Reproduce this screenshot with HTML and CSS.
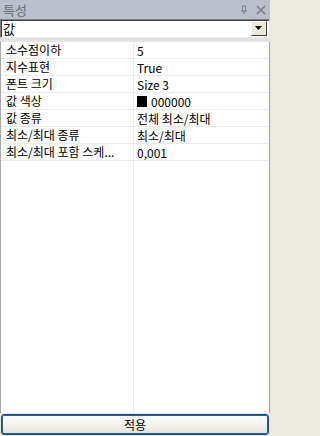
FILE: index.html
```html
<!DOCTYPE html>
<html>
<head>
<meta charset="utf-8">
<link rel="stylesheet" href="styles.css">
</head>
<body>
<div class="panel">
  <div class="titlebar">
    <span class="title">특성</span>
    <span class="tools">
      <svg class="pin" width="10" height="10" viewBox="0 0 10 10"><path d="M3 1h4M3.5 1v5M6.5 1v5M2 6h6M5 6v3" stroke="#7b808a" stroke-width="1" fill="none"/></svg>
      <svg class="close" width="10" height="10" viewBox="0 0 10 10"><path d="M1 1L9 9M9 1L1 9" stroke="#7b808a" stroke-width="1.6" fill="none"/></svg>
    </span>
  </div>
  <div class="combo">
    <span class="combo-text">값</span>
    <span class="combo-btn"><svg width="8" height="5" viewBox="0 0 8 5"><path d="M0 0h7L3.5 4z" fill="#000"/></svg></span>
  </div>
  <div class="gap"></div>
  <div class="grid">
    <div class="row"><div class="name">소수점이하</div><div class="val">5</div></div>
    <div class="row"><div class="name">지수표현</div><div class="val">True</div></div>
    <div class="row"><div class="name">폰트 크기</div><div class="val">Size 3</div></div>
    <div class="row"><div class="name">값 색상</div><div class="val"><span class="swatch"></span>000000</div></div>
    <div class="row"><div class="name">값 종류</div><div class="val">전체 최소/최대</div></div>
    <div class="row"><div class="name">최소/최대 종류</div><div class="val">최소/최대</div></div>
    <div class="row"><div class="name">최소/최대 포함 스케...</div><div class="val">0,001</div></div>
    <div class="row filler"><div class="name"></div><div class="val"></div></div>
  </div>
  <div class="footer">
    <button class="apply">적용</button>
  </div>
</div>
</body>
</html>
```

FILE: styles.css
```css
html, body {
  margin: 0;
  padding: 0;
  background: #ebe9e0;
}
body {
  width: 270px;
  height: 436px;
  overflow: hidden;
  font-family: "Noto Sans CJK KR", "DejaVu Sans", sans-serif;
  font-size: 12px;
  color: #000;
}
.panel {
  display: flex;
  flex-direction: column;
  height: 436px;
}
.titlebar {
  height: 19px;
  background: #b9bfcb;
  display: flex;
  align-items: center;
  justify-content: space-between;
  padding: 0 4px 0 3px;
}
.title {
  color: #676c77;
  font-size: 13px;
  line-height: 19px;
}
.tools {
  display: flex;
  gap: 7px;
  align-items: center;
}
.combo {
  height: 19px;
  box-sizing: border-box;
  background: #fff;
  border-top: 1px solid #7f7d75;
  border-left: 1px solid #7f7d75;
  border-bottom: 1px solid #ebe9e0;
  border-right: 1px solid #ebe9e0;
  box-shadow: inset 1px 1px 0 #404040;
  display: flex;
  align-items: center;
  justify-content: space-between;
  padding: 0 2px 0 2px;
}
.combo-text {
  font-size: 13px;
  line-height: 16px;
}
.combo-btn {
  width: 16px;
  height: 15px;
  box-sizing: border-box;
  background: #ece9d8;
  border: 1px solid;
  border-color: #fff #404040 #404040 #fff;
  display: flex;
  align-items: center;
  justify-content: center;
}
.gap {
  height: 3px;
  background: #e3e3e3;
}
.grid {
  flex: 1;
  background: #fff;
  border-left: 1px solid #a7a6aa;
  border-right: 1px solid #a7a6aa;
  border-top: 1px solid #e6e6e6;
  display: flex;
  flex-direction: column;
}
.row {
  display: grid;
  grid-template-columns: 133px 1fr;
  height: 16px;
  border-bottom: 1px solid #ececec;
  line-height: 15px;
}
.row .name {
  padding-left: 5px;
  border-right: 1px solid #ececec;
  white-space: nowrap;
  overflow: hidden;
}
.row .val {
  padding-left: 3px;
  display: flex;
  align-items: center;
  gap: 4px;
  white-space: nowrap;
}
.row.filler {
  flex: 1;
  border-bottom: none;
}
.swatch {
  display: inline-block;
  width: 10px;
  height: 11px;
  background: #000;
}
.footer {
  padding: 1px;
}
.apply {
  display: block;
  width: 100%;
  height: 21px;
  box-sizing: border-box;
  border: 1px solid #1d4a79;
  border-radius: 3px;
  box-shadow: inset 0 0 0 1px #2c5e93;
  background: linear-gradient(#ffffff, #f2f1ec 60%, #e2e1da);
  font-family: "Noto Sans CJK KR", "DejaVu Sans", sans-serif;
  font-size: 12px;
  color: #000;
  padding: 0;
}
```
